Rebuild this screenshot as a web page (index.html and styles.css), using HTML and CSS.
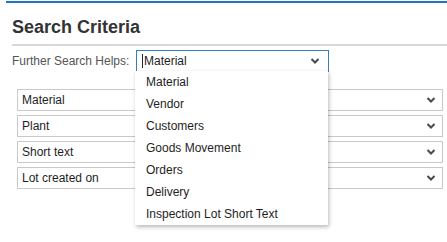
FILE: index.html
```html
<!DOCTYPE html>
<html lang="en">
<head>
    <meta charset="UTF-8">
    <meta name="viewport" content="width=device-width, initial-scale=1.0">
    <title>Search Criteria</title>
    <link rel="stylesheet" href="styles.css">
</head>
<body>
    <div class="topline"></div>
    <div class="page">
        <h1>Search Criteria</h1>
        <div class="separator"></div>

        <div class="helps">
            <label for="helpSelect">Further Search Helps:</label>
            <div class="combo">
                <div class="combo-field" id="helpSelect">
                    <span class="caret"></span>
                    <span class="combo-value">Material</span>
                    <svg class="chevron" width="10" height="6" viewBox="0 0 10 6"><path d="M1.5 1 L5 4.5 L8.5 1" fill="none" stroke="#4a4a4a" stroke-width="2"/></svg>
                </div>
                <ul class="combo-list">
                    <li>Material</li>
                    <li>Vendor</li>
                    <li>Customers</li>
                    <li>Goods Movement</li>
                    <li>Orders</li>
                    <li>Delivery</li>
                    <li>Inspection Lot Short Text</li>
                </ul>
            </div>
        </div>

        <div class="criteria">
            <div class="criteria-row">
                <span>Material</span>
                <svg class="chevron" width="10" height="6" viewBox="0 0 10 6"><path d="M1.5 1 L5 4.5 L8.5 1" fill="none" stroke="#4a4a4a" stroke-width="2"/></svg>
            </div>
            <div class="criteria-row">
                <span>Plant</span>
                <svg class="chevron" width="10" height="6" viewBox="0 0 10 6"><path d="M1.5 1 L5 4.5 L8.5 1" fill="none" stroke="#4a4a4a" stroke-width="2"/></svg>
            </div>
            <div class="criteria-row">
                <span>Short text</span>
                <svg class="chevron" width="10" height="6" viewBox="0 0 10 6"><path d="M1.5 1 L5 4.5 L8.5 1" fill="none" stroke="#4a4a4a" stroke-width="2"/></svg>
            </div>
            <div class="criteria-row">
                <span>Lot created on</span>
                <svg class="chevron" width="10" height="6" viewBox="0 0 10 6"><path d="M1.5 1 L5 4.5 L8.5 1" fill="none" stroke="#4a4a4a" stroke-width="2"/></svg>
            </div>
        </div>
    </div>
</body>
</html>
```

FILE: styles.css
```css
html,
body {
    min-height: 242px;
}

body {
    font-family: 'Liberation Sans', Arial, sans-serif;
    font-size: 12px;
    background-color: #ffffff;
    color: #1e1e1e;
    margin: 0;
    padding: 0;
}

.topline {
    height: 2px;
    margin: 1px 0 0 6px;
    background-color: #1f76c4;
}

.page {
    padding: 0 0 50px 12px;
}

h1 {
    margin: 13px 0 0;
    font-size: 18px;
    line-height: 22px;
    font-weight: bold;
    color: #333;
}

.separator {
    height: 2px;
    margin-top: 6px;
    background-color: #d9d9d9;
}

.helps {
    display: flex;
    align-items: center;
    margin-top: 4px;
}

label {
    width: 124px;
    color: #555;
}

.combo {
    position: relative;
}

.combo-field {
    display: flex;
    align-items: center;
    width: 178px;
    height: 20px;
    border: 1px solid #2f7fc3;
    padding: 0 8px 0 5px;
}

.caret {
    width: 1px;
    height: 14px;
    background-color: #222;
    margin-right: 1px;
}

.combo-value {
    flex: 1;
}

.combo-list {
    position: absolute;
    top: 21px;
    left: -1px;
    width: 193px;
    margin: 0;
    padding: 0;
    list-style: none;
    background: #ffffff;
    box-shadow: 1px 2px 4px rgba(0, 0, 0, 0.28);
    z-index: 2;
}

.combo-list li {
    height: 22px;
    line-height: 22px;
    padding-left: 11px;
}

.criteria {
    display: flex;
    flex-direction: column;
    gap: 4px;
    margin: 17px 0 0 5px;
    width: 426px;
}

.criteria-row {
    display: flex;
    align-items: center;
    justify-content: space-between;
    height: 20px;
    border: 1px solid #c9c9c9;
    padding: 0 6px 0 4px;
}
```
